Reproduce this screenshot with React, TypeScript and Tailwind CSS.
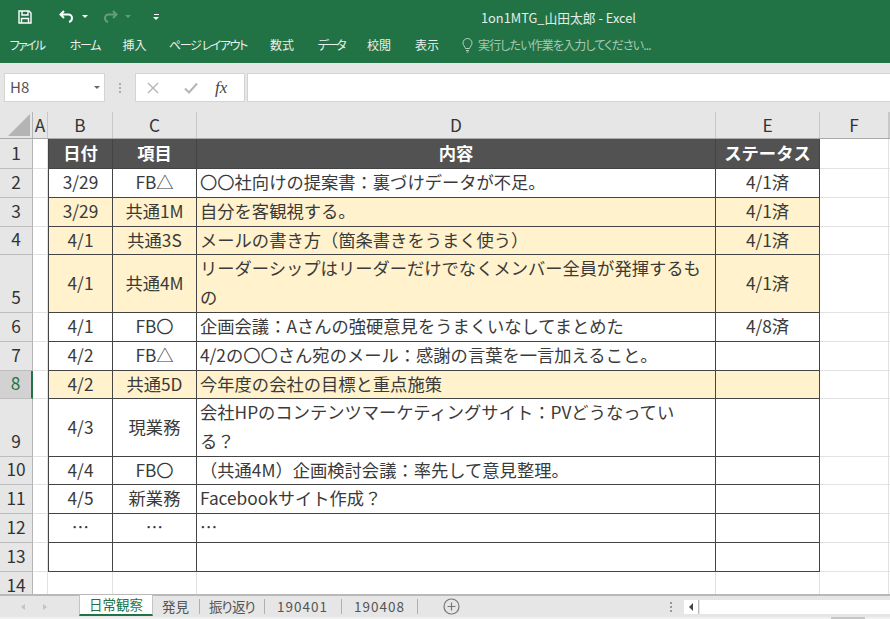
const cols = "grid grid-cols-[33px_15px_65px_84px_519px_104px_69px_1fr] grid-rows-[minmax(0,1fr)]";
const font = { fontFamily: '"Noto Sans CJK JP", "Noto Sans", sans-serif' };

const tabs = [
  { label: "ファイル", cls: "ml-[10px] w-[34px] tracking-[-1.75px]" },
  { label: "ホーム", cls: "ml-[26px] w-[30px] tracking-[-1.3px]" },
  { label: "挿入", cls: "ml-[23px] w-[23px]" },
  { label: "ページ レイアウト", cls: "ml-[23px] w-[78px] tracking-[-1.4px]" },
  { label: "数式", cls: "ml-[23px] w-[24px]" },
  { label: "データ", cls: "ml-[23px] w-[28px] tracking-[-2.3px]" },
  { label: "校閲", cls: "ml-[22px] w-[24px]" },
  { label: "表示", cls: "ml-[24px] w-[24px]" },
];

const rows = [
  { n: 1, h: "h-[30px]", head: true, b: "日付", c: "項目", d: "内容", e: "ステータス" },
  { n: 2, h: "h-[29px]", b: "3/29", c: "FB△", d: "〇〇社向けの提案書：裏づけデータが不足。", e: "4/1済" },
  { n: 3, h: "h-[29px]", fill: true, b: "3/29", c: "共通1M", d: "自分を客観視する。", e: "4/1済" },
  { n: 4, h: "h-[28px]", fill: true, b: "4/1", c: "共通3S", d: "メールの書き方（箇条書きをうまく使う）", e: "4/1済" },
  { n: 5, h: "h-[58px]", fill: true, b: "4/1", c: "共通4M", d: "リーダーシップはリーダーだけでなくメンバー全員が発揮するも\nの", e: "4/1済" },
  { n: 6, h: "h-[29px]", b: "4/1", c: "FB〇", d: "企画会議：Aさんの強硬意見をうまくいなしてまとめた", e: "4/8済" },
  { n: 7, h: "h-[29px]", b: "4/2", c: "FB△", d: "4/2の〇〇さん宛のメール：感謝の言葉を一言加えること。", e: "" },
  { n: 8, h: "h-[28px]", fill: true, active: true, b: "4/2", c: "共通5D", d: "今年度の会社の目標と重点施策", e: "" },
  { n: 9, h: "h-[58px]", b: "4/3", c: "現業務", d: "会社HPのコンテンツマーケティングサイト：PVどうなってい\nる？", e: "" },
  { n: 10, h: "h-[28px]", b: "4/4", c: "FB〇", d: "（共通4M）企画検討会議：率先して意見整理。", e: "" },
  { n: 11, h: "h-[29px]", b: "4/5", c: "新業務", d: "Facebookサイト作成？", e: "" },
  { n: 12, h: "h-[29px]", b: "…", c: "…", d: "…", e: "" },
  { n: 13, h: "h-[29px]", b: "", c: "", d: "", e: "" },
];

function Sheet() {
  return (
    <div className="h-[482px] bg-white text-[17.3px]">
      {/* column headers */}
      <div className={`${cols} h-[27px] bg-[#e6e6e6] leading-[26px] text-[#333] border-b border-[#aaa]`}>
        <div className="border-r border-[#b5b5b5] relative">
          <div className="absolute right-[2px] bottom-[2px] w-0 h-0 border-l-[22px] border-l-transparent border-b-[22px] border-b-[#b4b4b4]" />
        </div>
        {["A", "B", "C", "D", "E", "F", ""].map((c, i) => (
          <div key={i} className="text-center border-r border-[#c8c8c8]">{c}</div>
        ))}
      </div>
      {rows.map((r) => {
        const bg = r.head ? "bg-[#525252] text-white font-bold" : r.fill ? "bg-[#fff2cc] text-[#3a3a3a]" : "bg-white text-[#3a3a3a]";
        const cell = `border-r border-b border-[#444] flex items-center pb-[3px] ${bg}`;
        return (
          <div key={r.n} className={`${cols} ${r.h} leading-[29px]`}>
            <div className={`flex items-end justify-center pb-px border-b border-[#bdbdbd] ${r.active ? "bg-[#d2d2d2] text-[#217346] border-r-2 border-r-[#217346]" : "bg-[#e6e6e6] text-[#333] border-r border-r-[#b5b5b5]"}`}>
              {r.n}
            </div>
            <div className="border-r border-b border-[#e2e2e2]" />
            <div className={`${cell} justify-center border-l`}>{r.b}</div>
            <div className={`${cell} justify-center`}>{r.c}</div>
            <div className={`${cell} px-[3px]`}>
              <span className={`whitespace-pre-line ${r.head ? "w-full text-center" : ""}`}>{r.d}</span>
            </div>
            <div className={`${cell} justify-center`}>{r.e}</div>
            <div className="border-r border-b border-[#e2e2e2]" />
            <div className="border-b border-[#e2e2e2]" />
          </div>
        );
      })}
      <div className={`${cols} h-[22px] leading-[22px]`}>
        <div className="flex justify-center pt-[2px] bg-[#e6e6e6] text-[#333] border-r border-[#b5b5b5]">14</div>
        <div className="border-r border-[#e2e2e2]" />
        <div className="border-r border-[#e2e2e2]" />
        <div className="border-r border-[#e2e2e2]" />
        <div className="border-r border-[#e2e2e2]" />
        <div className="border-r border-[#e2e2e2]" />
        <div className="border-r border-[#e2e2e2]" />
        <div />
      </div>
    </div>
  );
}

function Sep() {
  return <div className="w-px h-[15px] bg-[#b0b0b0]" />;
}

export default function App() {
  return (
    <div className="w-[890px] h-[619px] overflow-hidden bg-[#e6e6e6]" style={font}>
      {/* title bar */}
      <div className="h-[63px] bg-[#217346] text-white">
        <div className="h-[33px] flex items-center relative">
          <svg className="ml-[18px]" width="14" height="14" viewBox="0 0 14 14" fill="none" stroke="#fff" strokeWidth="1.4">
            <path d="M1 1h10l2 2v10H1z" />
            <path d="M4 1v4h6V1M3.500 13V8.500h7V13" />
          </svg>
          <svg className="ml-[27px]" width="16" height="13" viewBox="0 0 16 13" fill="none" stroke="#fff" strokeWidth="2">
            <path d="M5 1 1.500 4.500 5 8M2 4.500h7.500a3.500 3.500 0 0 1 3.500 3.500c0 2-1 3.500-3 4" />
          </svg>
          <div className="ml-[7px] w-0 h-0 border-x-[3px] border-x-transparent border-t-[3px] border-t-white" />
          <svg className="ml-[14px] opacity-30" width="16" height="13" viewBox="0 0 16 13" fill="none" stroke="#fff" strokeWidth="2">
            <path d="M11 1l3.500 3.500L11 8M14 4.500H6.500A3.500 3.500 0 0 0 3 8c0 2 1 3.500 3 4" />
          </svg>
          <div className="ml-[7px] w-0 h-0 border-x-[3px] border-x-transparent border-t-[3px] border-t-white opacity-30" />
          <div className="ml-[22px] flex flex-col items-center gap-[2px]">
            <div className="w-[5px] h-px bg-white" />
            <div className="w-0 h-0 border-x-[3px] border-x-transparent border-t-[3px] border-t-white" />
          </div>
          <div className="absolute left-[481px] top-[9px] text-[12.800px] leading-[18px] whitespace-nowrap text-[#e4eee8]">1on1MTG_山田太郎 - Excel</div>
        </div>
        <div className="h-[24px] flex items-center text-[12px] text-[#e9f1ec] whitespace-nowrap [font-feature-settings:'palt']">
          {tabs.map((t) => (
            <div key={t.label} className={`${t.cls} flex justify-center`}>{t.label}</div>
          ))}
          <svg className="ml-[23px] mr-[5px]" width="11" height="15" viewBox="0 0 11 15" fill="none" stroke="#b4d0bf" strokeWidth="1">
            <path d="M3.500 10.500C3 8.500 1 7.500 1 5a4.500 4.500 0 0 1 9 0c0 2.500-2 3.500-2.500 5.500zM4 12.500h3M4.500 14h2" />
          </svg>
          <div className="text-[#a9c9b6] tracking-[-0.85px]">実行したい作業を入力してください...</div>
        </div>
      </div>

      {/* formula bar */}
      <div className="h-[49px] flex pt-[10px] pl-[4px]">
        <div className="w-[101px] h-[29px] bg-white border border-[#d4d4d4] flex items-center justify-between pl-[5px] pr-[4px] text-[15px] text-[#555]">
          H8
          <div className="w-0 h-0 border-x-[3px] border-x-transparent border-t-[3px] border-t-[#666]" />
        </div>
        <div className="w-[30px] h-[29px] flex flex-col items-center justify-center gap-[2px]">
          <div className="w-[2px] h-[2px] bg-[#aaa]" />
          <div className="w-[2px] h-[2px] bg-[#aaa]" />
          <div className="w-[2px] h-[2px] bg-[#aaa]" />
        </div>
        <div className="w-[110px] h-[29px] bg-white border border-[#d4d4d4] flex items-center text-[#9a9a9a]">
          <svg className="ml-[11px]" width="12" height="12" viewBox="0 0 12 12" stroke="#b5b5b5" strokeWidth="1.400">
            <path d="M1 1l10 10M11 1 1 11" />
          </svg>
          <svg className="ml-[25px]" width="14" height="12" viewBox="0 0 14 12" fill="none" stroke="#b5b5b5" strokeWidth="2">
            <path d="M1 6.500 5 10.500 13 1.500" />
          </svg>
          <span className="ml-[17px] text-[17px] italic leading-none text-[#444]" style={{ fontFamily: '"Liberation Serif", serif' }}>fx</span>
        </div>
        <div className="ml-[2px] flex-1 h-[29px] bg-white border-y border-l border-[#d4d4d4]" />
      </div>

      <Sheet />

      {/* sheet tabs */}
      <div className="h-[23px] flex items-center border-t-2 border-[#b9b9b9] bg-[#e6e6e6] text-[13.500px] text-[#555] whitespace-nowrap">
        <div className="ml-[21px] w-0 h-0 border-y-[3px] border-y-transparent border-r-[4px] border-r-[#c4c4c4]" />
        <div className="ml-[18px] w-0 h-0 border-y-[3px] border-y-transparent border-l-[4px] border-l-[#c4c4c4]" />
        <div className="ml-[32px] w-[74px] h-[21px] -mt-[2px] bg-white border-x border-[#c4c4c4] border-b-2 border-b-[#217346] text-[#217346] text-center leading-[19px]">日常観察</div>
        <div className="ml-[9px] w-[27px]">発見</div>
        <div className="ml-[10px]"><Sep /></div>
        <div className="ml-[9px] w-[46px] tracking-[-2px]">振り返り</div>
        <div className="ml-[9px]"><Sep /></div>
        <div className="ml-[12px] w-[51px] tracking-[1px]">190401</div>
        <div className="ml-[13px]"><Sep /></div>
        <div className="ml-[12px] w-[51px] tracking-[1px]">190408</div>
        <div className="ml-[12px]"><Sep /></div>
        <svg className="ml-[25px]" width="17" height="17" viewBox="0 0 17 17" fill="none" stroke="#777" strokeWidth="1.200">
          <circle cx="8.500" cy="8.500" r="7.500" />
          <path d="M8.500 4.500v8M4.500 8.500h8" />
        </svg>
        <div className="ml-[210px] flex flex-col gap-[2px]">
          <div className="w-[2px] h-[2px] bg-[#999]" />
          <div className="w-[2px] h-[2px] bg-[#999]" />
          <div className="w-[2px] h-[2px] bg-[#999]" />
        </div>
        <div className="ml-[12px] w-[15px] h-[14px] bg-white border-r border-[#bbb] flex items-center justify-center">
          <div className="w-0 h-0 border-y-[4px] border-y-transparent border-r-[4px] border-r-[#444]" />
        </div>
        <div className="flex-1 h-[14px] bg-white ml-px" />
      </div>
      <div className="h-[2px] flex bg-[#f0f0f0]">
        <div className="ml-[831px] w-[34px] bg-[#c6c6c6]" />
      </div>
    </div>
  );
}
